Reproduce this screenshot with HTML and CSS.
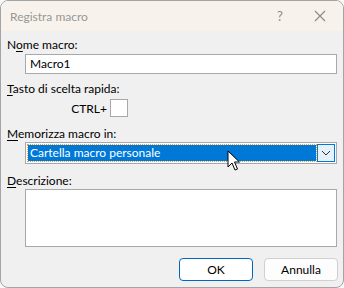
FILE: index.html
```html
<html>
<head>
	<link rel="stylesheet" href="styles.css">
</head>
<body>
	<div class='window'>
		<div class='titlebar'>
			<span class='title'>Registra macro</span>
			<span class='help'>?</span>
			<span class='close'>
				<svg width='12' height='12' viewBox='0 0 12 12'><path d='M1 1L11 11M11 1L1 11' stroke='#8a8a8a' stroke-width='1.1' fill='none'/></svg>
			</span>
		</div>

		<div class='content'>
			<div class='lbl first'>N<u>o</u>me macro:</div>
			<div class='field textbox'>Macro1</div>

			<div class='lbl gap'><u>T</u>asto di scelta rapida:</div>
			<div class='hotkey'>
				<span>CTRL+</span>
				<span class='keybox'></span>
			</div>

			<div class='lbl gap2'><u>M</u>emorizza macro in:</div>
			<div class='field combo'>
				<div class='selected'>Cartella macro personale</div>
				<div class='dropbtn'>
					<svg width='10' height='6' viewBox='0 0 10 6'><path d='M1 1L5 5L9 1' stroke='#333' stroke-width='1' fill='none'/></svg>
				</div>
			</div>

			<div class='lbl gap2'><u>D</u>escrizione:</div>
			<div class='field memo'></div>

			<div class='buttons'>
				<div class='btn default'>OK</div>
				<div class='btn'>Annulla</div>
			</div>
		</div>

		<svg class='cursor' width='14' height='22' viewBox='0 0 14 22'>
			<path d='M1 1L1 17L5 13L8 20L10.5 19L7.5 12L12.5 12Z' fill='#fff' stroke='#000' stroke-width='1' stroke-linejoin='round'/>
		</svg>
	</div>
</body>
</html>
```

FILE: styles.css
```css
html {
  box-sizing: border-box;
}
*, *:before, *:after {
  box-sizing: inherit;
}

body {
	margin: 0;
	background: #fafafa;
	font-family: 'Lato', sans-serif;
	font-size: 12px;
	color: #000;
}

.window {
	position: relative;
	width: 344px;
	height: 288px;
	border: 1px solid #a4a4a4;
	border-radius: 8px;
	background: #f0f0f0;
	overflow: hidden;
}

.titlebar {
	height: 30px;
	background: #f8f2ec;
	display: flex;
	align-items: center;
	padding-left: 9px;
}
.titlebar .title {
	color: #979797;
	flex: 1;
}
.titlebar .help {
	color: #8a8a8a;
	font-size: 13px;
	width: 20px;
	text-align: center;
	margin-right: 24px;
}
.titlebar .close {
	width: 12px;
	height: 12px;
	margin-right: 17px;
	display: flex;
}

.content {
	padding: 0 5px 0 6px;
}

.lbl {
	line-height: 16px;
	height: 16px;
}
.lbl u {
	text-underline-offset: 2px;
}
.lbl.first { margin-top: 6px; }
.lbl.gap { margin-top: 7px; }
.lbl.gap2 { margin-top: 9px; }

.field {
	margin-left: 18px;
	width: 312px;
	background: #fff;
	border: 1px solid #a8a8a8;
}
.field.textbox {
	margin-top: 1px;
	height: 20px;
	line-height: 18px;
	padding-left: 4px;
}

.hotkey {
	margin-top: 2px;
	margin-left: 60px;
	width: 61px;
	display: flex;
	justify-content: flex-end;
	align-items: center;
	height: 18px;
}
.hotkey span:first-child {
	margin-right: 3px;
}
.keybox {
	width: 18px;
	height: 18px;
	background: #fff;
	border: 1px solid #a8a8a8;
}

.field.combo {
	height: 22px;
	padding: 2px 1px 2px 2px;
	display: flex;
}
.combo .selected {
	flex: 1;
	background: #0078d7;
	color: #fff;
	line-height: 16px;
	padding-left: 2px;
	outline: 1px dotted #e8a33c;
}
.combo .dropbtn {
	width: 18px;
	margin-top: -1px;
	margin-bottom: -1px;
	margin-left: 1px;
	background: #e5f1fb;
	border: 1px solid #0078d7;
	display: flex;
	align-items: center;
	justify-content: center;
}

.field.memo {
	height: 58px;
}

.buttons {
	margin-top: 11px;
	display: flex;
	justify-content: flex-end;
	gap: 11px;
}
.btn {
	width: 74px;
	height: 23px;
	line-height: 21px;
	text-align: center;
	background: #fdfdfd;
	border: 1px solid #d0d0d0;
	border-radius: 4px;
}
.btn.default {
	background: #fff;
	border: 1px solid #0067c0;
}

.cursor {
	position: absolute;
	left: 226px;
	top: 149px;
}
```
